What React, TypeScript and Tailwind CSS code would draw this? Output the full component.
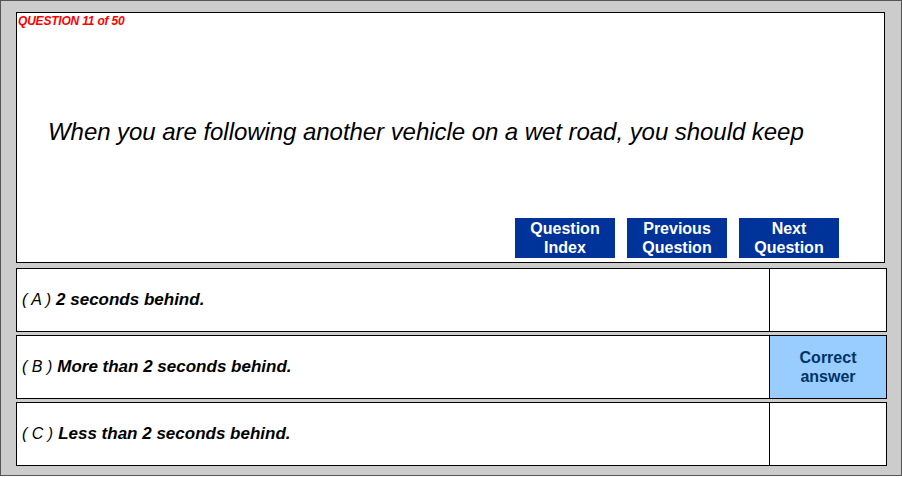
import React from 'react';

const answers = [
  { key: 'A', text: '2 seconds behind.', correct: false },
  { key: 'B', text: 'More than 2 seconds behind.', correct: true },
  { key: 'C', text: 'Less than 2 seconds behind.', correct: false },
];

const buttons = [
  ['Question', 'Index'],
  ['Previous', 'Question'],
  ['Next', 'Question'],
];

export default function App() {
  return (
    <div className="w-[902px] h-[478px] bg-white font-['Liberation_Sans',Arial,sans-serif]">
      <div className="w-[902px] h-[476px] bg-[#cccccc] border border-[#555555] pt-[11px] pl-[15px]">
        {/* Question panel */}
        <div className="w-[869px] h-[251px] bg-white border border-black flex flex-col">
          <div className="pl-[1px] pt-[1px] text-[12px] leading-[14px] font-bold italic text-[#ff0000] tracking-[-0.2px]">
            QUESTION 11 of 50
          </div>
          <div className="pl-[31px] pt-[90px] text-[24px] leading-[28px] italic text-black tracking-[-0.05px]">
            When you are following another vehicle on a wet road, you should keep
          </div>
          <div className="flex gap-3 pl-[498px] pt-[72px]">
            {buttons.map(([a, b]) => (
              <div
                key={a + b}
                className="w-[100px] h-[40px] bg-[#003399] text-white font-bold text-[16px] leading-[19px] flex flex-col items-center justify-center"
              >
                <span>{a}</span>
                <span>{b}</span>
              </div>
            ))}
          </div>
        </div>

        {/* Answers */}
        <div className="flex flex-col gap-[3px] pt-[5px]">
          {answers.map((ans) => (
            <div key={ans.key} className="w-[871px] h-[64px] bg-white border border-black flex">
              <div className="flex-1 flex items-center pl-[5px] text-black italic">
                <span className="text-[16px] font-light mr-[5px]">( {ans.key} )</span>
                <span className="text-[17px] font-bold">{ans.text}</span>
              </div>
              <div
                className={`w-[117px] border-l border-black flex flex-col items-center justify-center text-[16px] leading-[19px] font-bold text-[#003366] ${
                  ans.correct ? 'bg-[#99ccff]' : 'bg-white'
                }`}
              >
                {ans.correct && (
                  <>
                    <span>Correct</span>
                    <span>answer</span>
                  </>
                )}
              </div>
            </div>
          ))}
        </div>
      </div>
    </div>
  );
}
